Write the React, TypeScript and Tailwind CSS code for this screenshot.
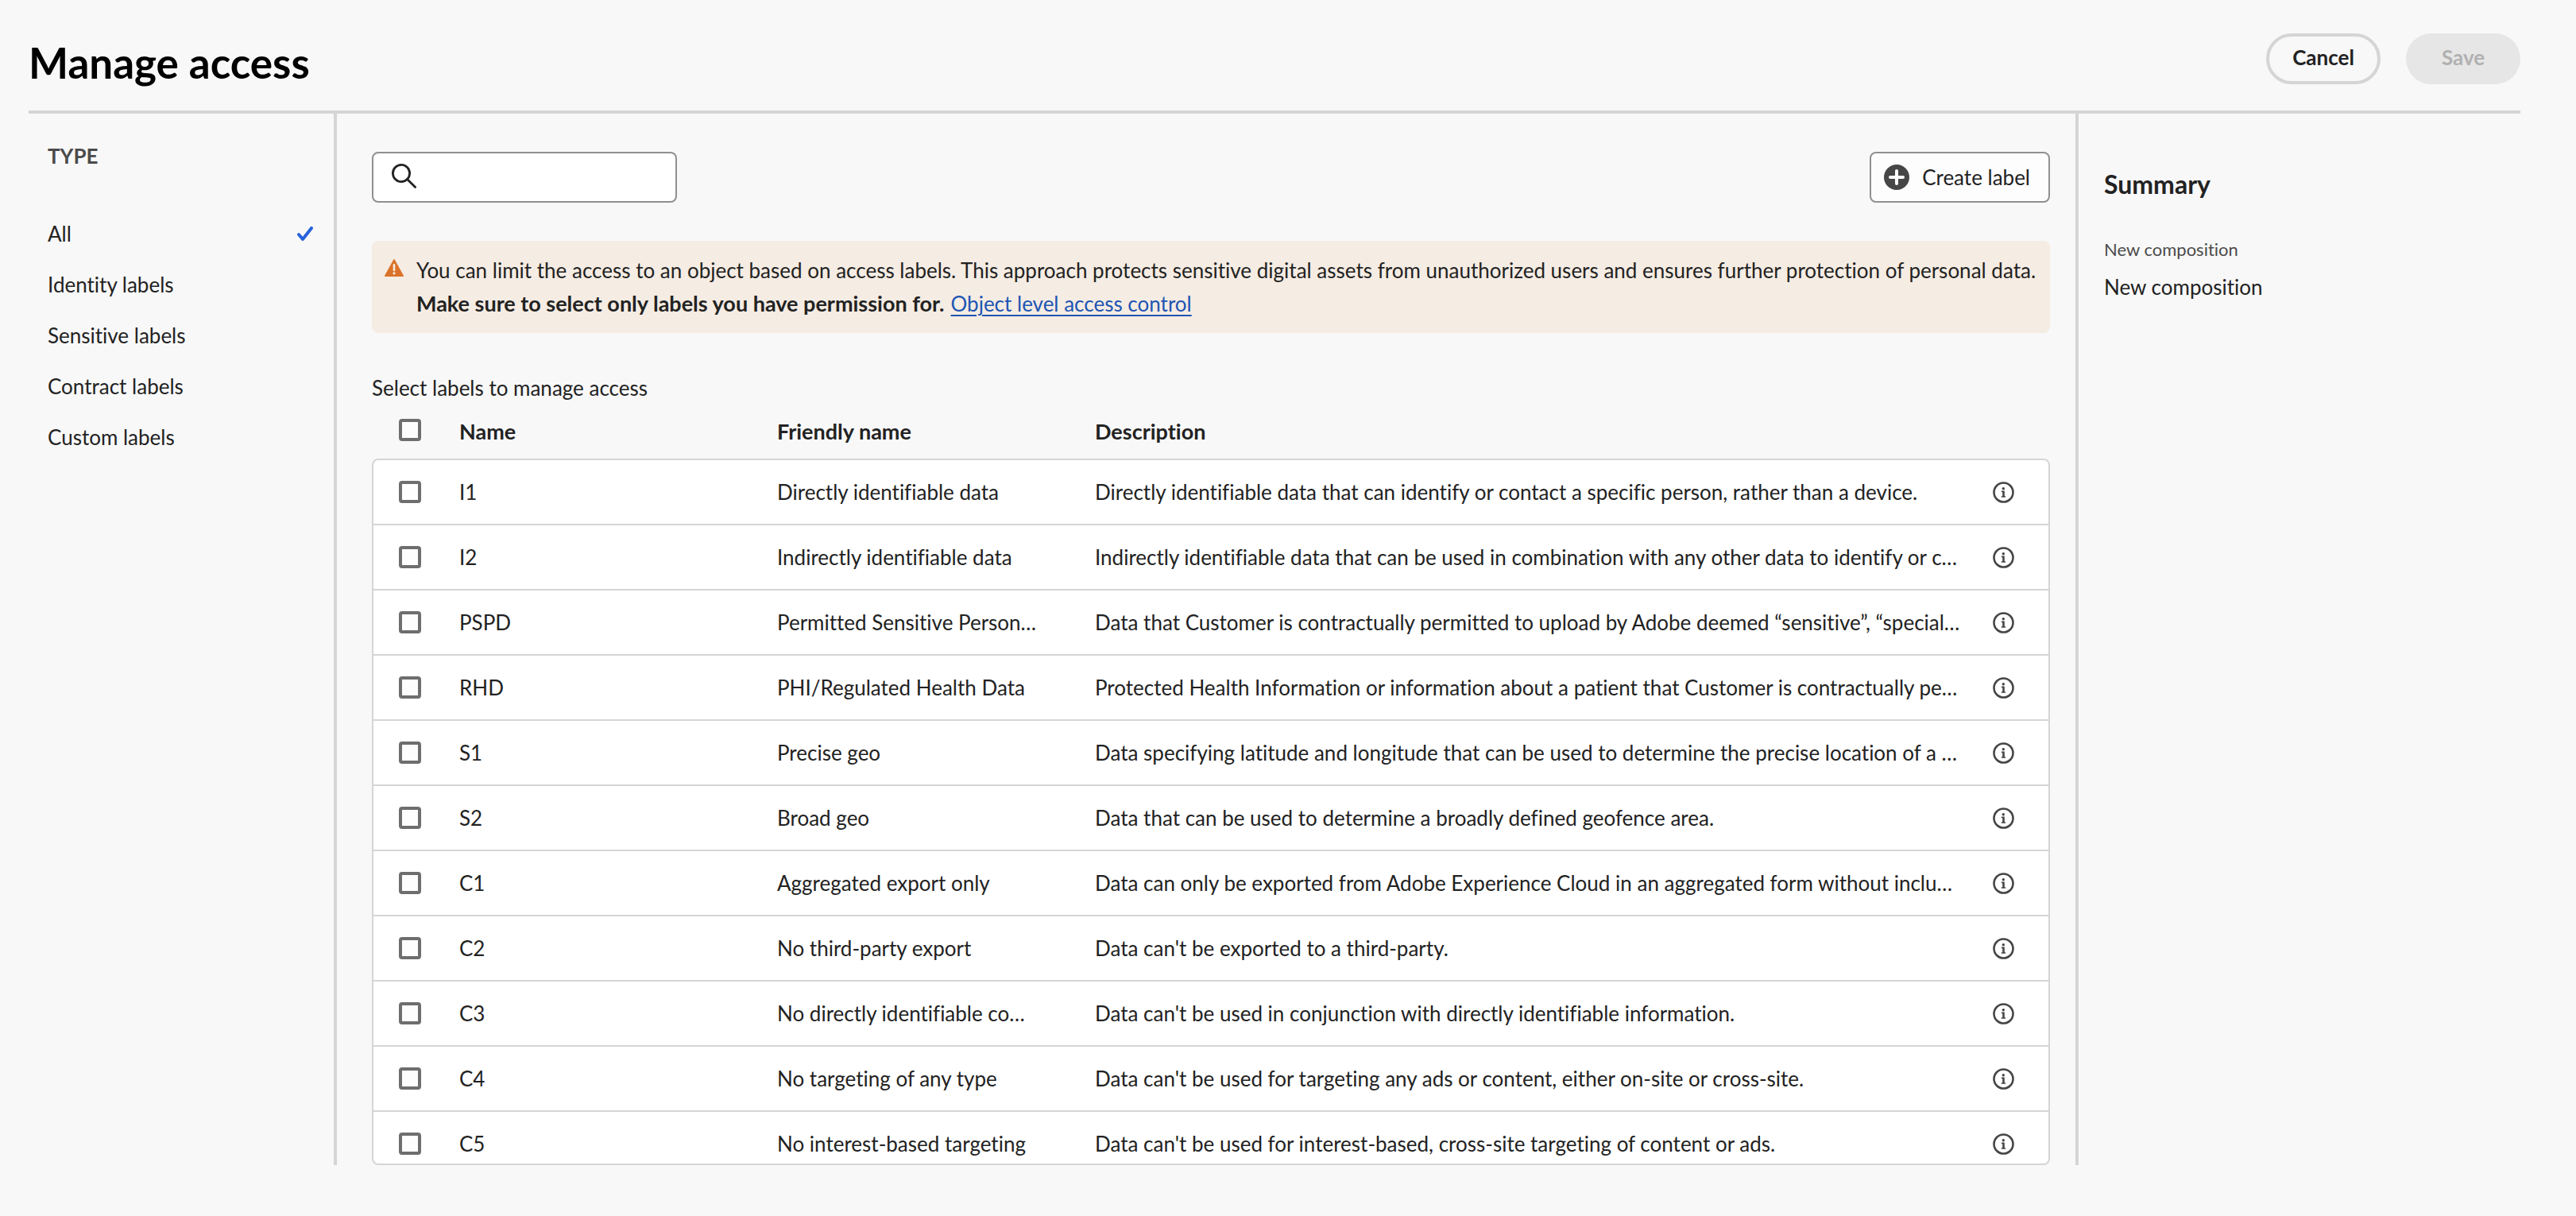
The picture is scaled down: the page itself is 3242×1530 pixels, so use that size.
type LabelRow = { name: string; friendly: string; description: string };

const types = ["All", "Identity labels", "Sensitive labels", "Contract labels", "Custom labels"];

const rows: LabelRow[] = [
  { name: "I1", friendly: "Directly identifiable data", description: "Directly identifiable data that can identify or contact a specific person, rather than a device." },
  { name: "I2", friendly: "Indirectly identifiable data", description: "Indirectly identifiable data that can be used in combination with any other data to identify or c…" },
  { name: "PSPD", friendly: "Permitted Sensitive Person…", description: "Data that Customer is contractually permitted to upload by Adobe deemed “sensitive”, “special…" },
  { name: "RHD", friendly: "PHI/Regulated Health Data", description: "Protected Health Information or information about a patient that Customer is contractually pe…" },
  { name: "S1", friendly: "Precise geo", description: "Data specifying latitude and longitude that can be used to determine the precise location of a …" },
  { name: "S2", friendly: "Broad geo", description: "Data that can be used to determine a broadly defined geofence area." },
  { name: "C1", friendly: "Aggregated export only", description: "Data can only be exported from Adobe Experience Cloud in an aggregated form without inclu…" },
  { name: "C2", friendly: "No third-party export", description: "Data can't be exported to a third-party." },
  { name: "C3", friendly: "No directly identifiable co…", description: "Data can't be used in conjunction with directly identifiable information." },
  { name: "C4", friendly: "No targeting of any type", description: "Data can't be used for targeting any ads or content, either on-site or cross-site." },
  { name: "C5", friendly: "No interest-based targeting", description: "Data can't be used for interest-based, cross-site targeting of content or ads." },
];

function SearchIcon() {
  return (
    <svg className="pointer-events-none absolute top-[15px] left-[24px] size-8" viewBox="0 0 32 32" fill="none" stroke="#222222" aria-hidden="true">
      <circle cx="13" cy="12" r="10.6" strokeWidth="2.8" />
      <path d="M20.5 19.5 30.6 29.6" strokeWidth="2.8" strokeLinecap="round" />
    </svg>
  );
}

function AddIcon() {
  return (
    <svg className="size-8 shrink-0" viewBox="0 0 32 32" aria-hidden="true">
      <circle cx="16" cy="16" r="16" fill="#464646" />
      <path d="M16 8v16M8 16h16" stroke="#fff" strokeWidth="4" strokeLinecap="round" />
    </svg>
  );
}

function AlertIcon() {
  return (
    <svg className="mt-[7px] h-[22px] w-6 shrink-0" viewBox="0 0 24 22" aria-hidden="true">
      <path d="M11.3.5a.8.8 0 0 1 1.4 0l11.2 20.3a.8.8 0 0 1-.7 1.2H.8a.8.8 0 0 1-.7-1.2z" fill="#da7329" />
      <path d="M12 7.2v6.8" stroke="#f5ece3" strokeWidth="2.6" strokeLinecap="round" />
      <circle cx="12" cy="17.8" r="1.6" fill="#f5ece3" />
    </svg>
  );
}

function CheckIcon() {
  return (
    <svg className="h-[18px] w-5" viewBox="0 0 20 18" fill="none" aria-hidden="true">
      <path d="m2 10 5 6L18 2" stroke="#2763dc" strokeWidth="4" strokeLinecap="round" strokeLinejoin="round" />
    </svg>
  );
}

function InfoIcon() {
  return (
    <svg className="size-[27px]" viewBox="0 0 27 27" fill="none" aria-hidden="true">
      <circle cx="13.5" cy="13.5" r="12" stroke="#464646" strokeWidth="2.6" />
      <circle cx="13.3" cy="8.8" r="1.7" fill="#464646" />
      <path d="M10.9 11.6h3.9v6.6h1.3v1.6h-5.3v-1.6h1.4v-5h-1.3z" fill="#464646" />
    </svg>
  );
}

function CheckBox({ label }: { label: string }) {
  return (
    <input
      type="checkbox"
      aria-label={label}
      className="block size-7 appearance-none rounded border-4 border-[#6e6e6e] bg-[#fdfdfd] checked:bg-[#2763dc]"
    />
  );
}

const columns = "grid grid-cols-[108px_400px_400px_minmax(0,1fr)_70px] items-center";
const heading = "pt-1 text-[27px] font-bold";

export default function App() {
  return (
    <div className="flex h-screen flex-col bg-[#f8f8f8] pr-[70px] pl-9 font-['Lato','Noto_Sans',sans-serif] text-[26px] leading-8 text-[#222222] [font-variant-ligatures:none]">
      <header className="flex h-[143px] shrink-0 items-start justify-between border-b-4 border-[#d5d5d5]">
        <h1 className="mt-[47px] text-[53px] leading-[64px] font-bold text-black">Manage access</h1>
        <div className="mt-[42px] flex gap-8">
          <button type="button" className="h-16 w-36 rounded-full border-4 border-[#d5d5d5] pb-1 font-bold">
            Cancel
          </button>
          <button type="button" disabled className="h-16 w-36 rounded-full bg-[#e6e6e6] pb-1 font-bold text-[#b1b1b1]">
            Save
          </button>
        </div>
      </header>

      <div className="flex min-h-0 flex-1 pb-16">
        <nav aria-label="Type" className="w-[388px] shrink-0 border-r-4 border-[#d5d5d5] pt-[37px] pr-[26px] pl-6">
          <h2 className="font-bold text-[#4b4b4b]">TYPE</h2>
          <ul className="mt-[50px]">
            {types.map((type, index) => (
              <li key={type}>
                <button type="button" aria-pressed={index === 0} className="flex h-16 w-full items-center justify-between text-left">
                  {type}
                  {index === 0 && <CheckIcon />}
                </button>
              </li>
            ))}
          </ul>
        </nav>

        <main className="flex min-w-0 flex-1 flex-col px-[44px] pt-12 pr-8">
          <div className="flex items-center justify-between">
            <label className="relative block">
              <SearchIcon />
              <input
                type="search"
                aria-label="Search labels"
                className="block h-16 w-96 rounded-lg border-2 border-[#909090] bg-white pr-4 pl-[68px]"
              />
            </label>
            <button type="button" className="flex h-16 items-center gap-4 rounded-lg border-2 border-[#909090] bg-[#fdfdfd] pr-[23px] pl-4">
              <AddIcon />
              Create label
            </button>
          </div>

          <section className="mt-12 flex gap-4 rounded-lg bg-[#f5ece3] p-4 pr-2 leading-[42px]">
            <AlertIcon />
            <div>
              <p>
                You can limit the access to an object based on access labels. This approach protects sensitive digital
                assets from unauthorized users and ensures further protection of personal data.
              </p>
              <p>
                <strong className="mr-2 text-[27px] font-bold">Make sure to select only labels you have permission for.</strong>
                <a href="#object-level-access-control" className="text-[#2054b4] underline decoration-2 underline-offset-4">
                  Object level access control
                </a>
              </p>
            </div>
          </section>

          <h2 id="labels-heading" className="mt-[53px]">
            Select labels to manage access
          </h2>
          <table aria-labelledby="labels-heading" className="flex min-h-0 flex-1 flex-col">
            <thead className="block">
              <tr className={`${columns} h-[73px] border-x-2 border-transparent text-left`}>
                <th scope="col" className="pl-8">
                  <CheckBox label="Select all labels" />
                </th>
                <th scope="col" className={heading}>Name</th>
                <th scope="col" className={heading}>Friendly name</th>
                <th scope="col" className={heading}>Description</th>
                <td />
              </tr>
            </thead>
            <tbody className="block min-h-0 flex-1 overflow-hidden rounded-lg border-2 border-[#d5d5d5] bg-white">
              {rows.map((row) => (
                <tr key={row.name} className={`${columns} h-[82px] border-b-2 border-[#d5d5d5]`}>
                  <td className="pl-8">
                    <CheckBox label={`Select ${row.name}`} />
                  </td>
                  <td>{row.name}</td>
                  <td className="whitespace-nowrap">{row.friendly}</td>
                  <td className="whitespace-nowrap">{row.description}</td>
                  <td>
                    <button type="button" aria-label={`About ${row.name}`} className="block">
                      <InfoIcon />
                    </button>
                  </td>
                </tr>
              ))}
            </tbody>
          </table>
        </main>

        <aside className="w-[560px] shrink-0 border-l-4 border-[#d5d5d5] px-8 pt-[69px]">
          <h2 className="text-[32px] leading-10 font-bold">Summary</h2>
          <dl className="mt-[46px]">
            <dt className="text-[22px] text-[#4b4b4b]">New composition</dt>
            <dd className="mt-[15px]">New composition</dd>
          </dl>
        </aside>
      </div>
    </div>
  );
}
